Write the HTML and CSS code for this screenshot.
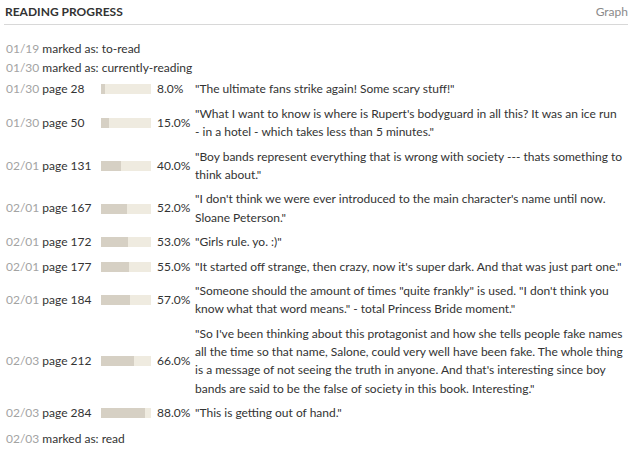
FILE: index.html
```html
<!DOCTYPE html>
<html>
<head>
<meta charset="utf-8">
<link rel="stylesheet" href="styles.css">
</head>
<body>
<div class="panel">
  <div class="head">
    <h2 class="title">READING PROGRESS</h2>
    <a class="graph" href="#">Graph</a>
  </div>
  <div class="log">
    <div class="status"><span class="date">01/19</span> marked as: to-read</div>
    <div class="status"><span class="date">01/30</span> marked as: currently-reading</div>

    <div class="entry"><div class="pg"><span class="date">01/30</span> page 28</div><div class="bar"><div class="fill" style="width:8%"></div></div><div class="pct">8.0%</div><div class="quote">"The ultimate fans strike again! Some scary stuff!"</div></div>
    <div class="entry"><div class="pg"><span class="date">01/30</span> page 50</div><div class="bar"><div class="fill" style="width:15%"></div></div><div class="pct">15.0%</div><div class="quote">"What I want to know is where is Rupert's bodyguard in all this? It was an ice run - in a hotel - which takes less than 5 minutes."</div></div>
    <div class="entry"><div class="pg"><span class="date">02/01</span> page 131</div><div class="bar"><div class="fill" style="width:40%"></div></div><div class="pct">40.0%</div><div class="quote">"Boy bands represent everything that is wrong with society --- thats something to think about."</div></div>
    <div class="entry"><div class="pg"><span class="date">02/01</span> page 167</div><div class="bar"><div class="fill" style="width:52%"></div></div><div class="pct">52.0%</div><div class="quote">"I don't think we were ever introduced to the main character's name until now. Sloane Peterson."</div></div>
    <div class="entry"><div class="pg"><span class="date">02/01</span> page 172</div><div class="bar"><div class="fill" style="width:53%"></div></div><div class="pct">53.0%</div><div class="quote">"Girls rule. yo. :)"</div></div>
    <div class="entry"><div class="pg"><span class="date">02/01</span> page 177</div><div class="bar"><div class="fill" style="width:55%"></div></div><div class="pct">55.0%</div><div class="quote">"It started off strange, then crazy, now it's super dark. And that was just part one."</div></div>
    <div class="entry"><div class="pg"><span class="date">02/01</span> page 184</div><div class="bar"><div class="fill" style="width:57%"></div></div><div class="pct">57.0%</div><div class="quote">"Someone should the amount of times "quite frankly" is used. "I don't think you know what that word means." - total Princess Bride moment."</div></div>
    <div class="entry"><div class="pg"><span class="date">02/03</span> page 212</div><div class="bar"><div class="fill" style="width:66%"></div></div><div class="pct">66.0%</div><div class="quote">"So I've been thinking about this protagonist and how she tells people fake names all the time so that name, Salone, could very well have been fake. The whole thing is a message of not seeing the truth in anyone. And that's interesting since boy bands are said to be the false of society in this book. Interesting."</div></div>
    <div class="entry"><div class="pg"><span class="date">02/03</span> page 284</div><div class="bar"><div class="fill" style="width:88%"></div></div><div class="pct">88.0%</div><div class="quote">"This is getting out of hand."</div></div>

    <div class="status last"><span class="date">02/03</span> marked as: read</div>
  </div>
</div>
</body>
</html>
```

FILE: styles.css
```css
html, body {
  margin: 0;
  padding: 0;
  background: #ffffff;
}
body {
  font-family: Lato, "Open Sans", sans-serif;
  font-size: 12px;
  color: #333333;
}
.panel {
  margin: 0 9px 0 4px;
}
.head {
  display: flex;
  justify-content: space-between;
  align-items: center;
  height: 25px;
  padding: 0 0 0 1px;
  border-bottom: 1px solid #d8d8d8;
  box-sizing: border-box;
}
.title {
  margin: 0;
  font-size: 12px;
  font-weight: bold;
  color: #333333;
  line-height: 16px;
}
.graph {
  color: #8a8a8a;
  text-decoration: none;
  font-size: 12px;
  line-height: 16px;
}
.log {
  padding: 14px 0 0 2px;
}
.status {
  line-height: 19px;
}
.status.last {
  margin-top: 3px;
}
.date {
  color: #a3a3a3;
}
.entry {
  display: grid;
  grid-template-columns: 95px 50px 44px 1fr;
  align-items: center;
  padding: 3.2px 0;
  line-height: 18.2px;
}
.bar {
  height: 10px;
  background: #efebe0;
}
.fill {
  height: 100%;
  background: #d6d0c4;
}
.pct {
  padding-left: 6px;
}
.quote {
  padding-right: 5px;
}
```
